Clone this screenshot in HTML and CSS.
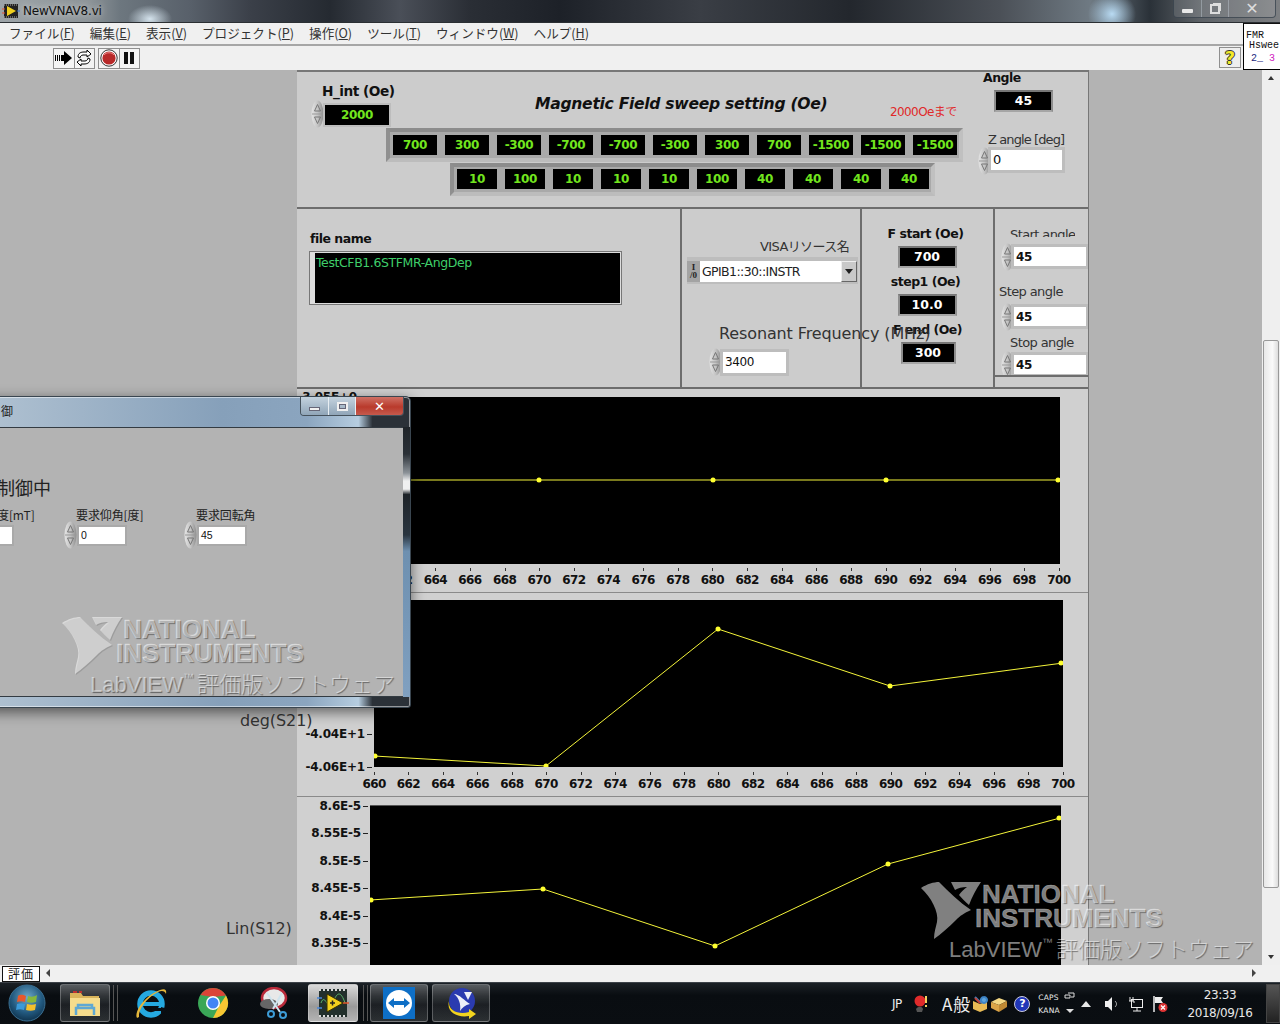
FILE: index.html
```html
<!DOCTYPE html>
<html lang="ja">
<head>
<meta charset="utf-8">
<title>NewVNAV8.vi</title>
<link rel="stylesheet" href="styles.css">
</head>
<body>
<svg class="defs" width="0" height="0">
  <defs>
    <linearGradient id="spinGrad" x1="0" x2="1" y1="0" y2="0">
      <stop offset="0" stop-color="#e4e4e4"/><stop offset=".5" stop-color="#c4c4c4"/><stop offset="1" stop-color="#8e8e8e"/>
    </linearGradient>
    <symbol id="spin" viewBox="0 0 13 28">
      <ellipse cx="6.5" cy="14" rx="6" ry="13.5" fill="url(#spinGrad)"/>
      <path d="M6.5 4.5 L9.5 11 H3.5 Z" fill="none" stroke="#777"/>
      <path d="M6.5 23.5 L9.5 17 H3.5 Z" fill="none" stroke="#777"/>
      <path d="M1 14 H12" stroke="#999"/>
    </symbol>
    <symbol id="nilogo" viewBox="0 0 60 58">
      <path d="M0 6 C6 2 13 0 18 0 C28 10 38 20 50 28 C43 31 39 34 35 38 C28 45 20 52 13 57 C13 50 15 45 16 40 C18 30 10 15 0 6 Z"/>
      <path d="M30 0 H60 C55 7 51 15 48 23 C44 20 41 16 38 13 C40 10 43 7 46 5 C41 5 37 6 34 8 Z"/>
    </symbol>
  </defs>
</svg>

<header class="titlebar">
  <svg class="app-icon" width="18" height="18" viewBox="0 0 18 18">
    <rect x="2" y="2" width="14" height="14" fill="#222"/>
    <path d="M2 3 H16 M2 15 H16" stroke="#aaa" stroke-dasharray="1 1"/>
    <path d="M5 4 L14 9 L5 14 Z" fill="#f0d020"/>
    <path d="M0 7 H3 M0 11 H3" stroke="#e05030"/><path d="M15 9 H18" stroke="#3070d0"/>
  </svg>
  <span class="title-text">NewVNAV8.vi</span>
  <div class="caption-buttons">
    <span class="cap cap-min"><i class="cap-bar"></i></span>
    <span class="cap cap-max"><i class="cap-sq"></i></span>
    <span class="cap cap-close">✕</span>
  </div>
</header>

<div class="chrome">
  <div class="chrome-bars">
    <nav class="menubar">
      <span>ファイル(<u>F</u>)</span><span>編集(<u>E</u>)</span><span>表示(<u>V</u>)</span><span>プロジェクト(<u>P</u>)</span><span>操作(<u>O</u>)</span><span>ツール(<u>T</u>)</span><span>ウィンドウ(<u>W</u>)</span><span>ヘルプ(<u>H</u>)</span>
    </nav>
    <div class="toolbar">
      <div class="tool-group">
        <span class="tool">
          <svg width="18" height="14" viewBox="0 0 18 14"><path d="M0 4 H1 V10 H0 Z M2 4 H3 V10 H2 Z M4 4 H5 V10 H4 Z M6 4 H9 V0 L17 7 L9 14 V10 H6 Z" fill="#000"/></svg>
        </span>
        <span class="tool">
          <svg width="18" height="18" viewBox="0 0 18 18" fill="none" stroke="#000"><path d="M3 8 C3 4 6 3 9 3 H12 V1 L16 5 L12 8 V6 H8 C6 6 5 8 5 9 Z" fill="#fff"/><path d="M15 10 C15 14 12 15 9 15 H6 V17 L2 13 L6 10 V12 H10 C12 12 13 10 13 9 Z" fill="#fff"/></svg>
        </span>
      </div>
      <div class="tool-group">
        <span class="tool">
          <svg width="18" height="18" viewBox="0 0 18 18"><circle cx="9" cy="9" r="8.2" fill="#fff" stroke="#333"/><circle cx="9" cy="9" r="6.6" fill="#b82a2a"/><path d="M4 6 C6 3 12 3 14 6" stroke="#e88" fill="none"/></svg>
        </span>
        <span class="tool">
          <svg width="12" height="12" viewBox="0 0 12 12"><path d="M1 0 H5 V12 H1 Z M7 0 H11 V12 H7 Z" fill="#111"/></svg>
        </span>
      </div>
      <span class="tool help-tool">
        <span class="help-mark">?</span>
      </span>
    </div>
  </div>
  <div class="vi-icon">
    <div class="vi-l1">FMR</div>
    <div class="vi-l2">Hswee</div>
    <div class="vi-l3"><span class="vi-a">2_</span> <span class="vi-b">3</span></div>
  </div>
</div>

<main class="main">
  <div class="panel">
    <section class="sec-top">
      <label class="lbl-b hint-label">H_int (Oe)</label>
      <svg class="spin hint-spin"><use href="#spin"/></svg>
      <div class="num-green hint-box">2000</div>
      <h1 class="sweep-title">Magnetic Field sweep setting (Oe)</h1>
      <div class="red-note">2000Oeまで</div>
      <label class="lbl-b angle-label">Angle</label>
      <div class="ind-white angle-box">45</div>
      <label class="lbl-n zangle-label">Z angle [deg]</label>
      <svg class="spin zangle-spin"><use href="#spin"/></svg>
      <div class="input zangle-input">0</div>
      <div class="array array-1">
        <span class="cell">700</span><span class="cell">300</span><span class="cell">-300</span><span class="cell">-700</span><span class="cell">-700</span><span class="cell">-300</span><span class="cell">300</span><span class="cell">700</span><span class="cell">-1500</span><span class="cell">-1500</span><span class="cell">-1500</span>
      </div>
      <div class="array array-2">
        <span class="cell">10</span><span class="cell">100</span><span class="cell">10</span><span class="cell">10</span><span class="cell">10</span><span class="cell">100</span><span class="cell">40</span><span class="cell">40</span><span class="cell">40</span><span class="cell">40</span>
      </div>
    </section>

    <section class="sec-row">
      <div class="sec sec-file">
        <label class="lbl-b file-label">file name</label>
        <div class="file-box">TestCFB1.6STFMR-AngDep</div>
      </div>
      <div class="sec sec-visa">
        <label class="lbl-n visa-label">VISAリソース名</label>
        <div class="combo">
          <span class="combo-io">I<br>/0</span>
          <span class="combo-text">GPIB1::30::INSTR</span>
          <span class="combo-arrow"></span>
        </div>
        <label class="res-label">Resonant Frequency (MHz)</label>
        <svg class="spin res-spin"><use href="#spin"/></svg>
        <div class="input res-input">3400</div>
      </div>
      <div class="sec sec-f">
        <label class="lbl-b f-label">F start (Oe)</label>
        <div class="ind-white f-box">700</div>
        <label class="lbl-b f-label">step1 (Oe)</label>
        <div class="ind-white f-box">10.0</div>
        <label class="lbl-b f-label f-end">F end (Oe)</label>
        <div class="ind-white f-box f-box-end">300</div>
      </div>
      <div class="sec sec-ang">
        <label class="lbl-n ang-l ang-l1">Start angle</label>
        <svg class="spin ang-s ang-s1"><use href="#spin"/></svg>
        <div class="input ang-i ang-i1">45</div>
        <label class="lbl-n ang-l ang-l2">Step angle</label>
        <svg class="spin ang-s ang-s2"><use href="#spin"/></svg>
        <div class="input ang-i ang-i2">45</div>
        <label class="lbl-n ang-l ang-l3">Stop angle</label>
        <svg class="spin ang-s ang-s3"><use href="#spin"/></svg>
        <div class="input ang-i ang-i3">45</div>
      </div>
    </section>

    <section class="chart chart-1">
      <div class="chart-row">
        <div class="yaxis yaxis-1"><span class="ylab">3.05E+0</span></div>
        <div class="plot plot-1">
          <svg width="694" height="167" viewBox="0 0 694 167">
            <polyline class="trace" points="0,83 173,83 347,83 520,83 693,83"/>
            <circle class="dot" cx="173" cy="83" r="2.5"/><circle class="dot" cx="347" cy="83" r="2.5"/><circle class="dot" cx="520" cy="83" r="2.5"/><circle class="dot" cx="692" cy="83" r="2.5"/>
          </svg>
        </div>
      </div>
      <div class="xaxis xaxis-1">
        <span>660</span><span>662</span><span>664</span><span>666</span><span>668</span><span>670</span><span>672</span><span>674</span><span>676</span><span>678</span><span>680</span><span>682</span><span>684</span><span>686</span><span>688</span><span>690</span><span>692</span><span>694</span><span>696</span><span>698</span><span>700</span>
      </div>
    </section>

    <section class="chart chart-2">
      <div class="chart-row">
        <div class="yaxis yaxis-2"><span class="ylab">-4.04E+1</span><span class="ylab">-4.06E+1</span></div>
        <div class="plot plot-2">
          <svg width="689" height="167" viewBox="0 0 689 167">
            <polyline class="trace" points="0,156 172,166 344,29 516,86 689,63"/>
            <circle class="dot" cx="1" cy="156" r="2.5"/><circle class="dot" cx="172" cy="166" r="2.5"/><circle class="dot" cx="344" cy="29" r="2.5"/><circle class="dot" cx="516" cy="86" r="2.5"/><circle class="dot" cx="687" cy="63" r="2.5"/>
          </svg>
        </div>
      </div>
      <div class="xaxis xaxis-2">
        <span>660</span><span>662</span><span>664</span><span>666</span><span>668</span><span>670</span><span>672</span><span>674</span><span>676</span><span>678</span><span>680</span><span>682</span><span>684</span><span>686</span><span>688</span><span>690</span><span>692</span><span>694</span><span>696</span><span>698</span><span>700</span>
      </div>
      <div class="axis-name deg-name">deg(S21)</div>
    </section>

    <section class="chart chart-3">
      <div class="chart-row">
        <div class="yaxis yaxis-3"><span class="ylab">8.6E-5</span><span class="ylab">8.55E-5</span><span class="ylab">8.5E-5</span><span class="ylab">8.45E-5</span><span class="ylab">8.4E-5</span><span class="ylab">8.35E-5</span></div>
        <div class="plot plot-3">
          <svg width="691" height="160" viewBox="0 0 691 160">
            <polyline class="trace" points="0,94 173,83 345,140 518,58 690,12"/>
            <circle class="dot" cx="1" cy="94" r="2.5"/><circle class="dot" cx="173" cy="83" r="2.5"/><circle class="dot" cx="345" cy="140" r="2.5"/><circle class="dot" cx="518" cy="58" r="2.5"/><circle class="dot" cx="689" cy="12" r="2.5"/>
          </svg>
        </div>
      </div>
      <div class="axis-name lin-name">Lin(S12)</div>
    </section>
  </div>
  <div class="vscroll">
    <span class="vs-up"></span>
    <span class="vs-thumb"></span>
    <span class="vs-down"></span>
  </div>
  <div class="watermark wm-main">
    <svg class="wm-logo"><use href="#nilogo"/></svg>
    <div class="wm-l1">NATIONAL</div>
    <div class="wm-l2">INSTRUMENTS</div>
    <div class="wm-l3"><span class="wm-lab">LabVIEW</span><span class="wm-tm">™</span><span class="wm-jp">評価版ソフトウェア</span></div>
  </div>
</main>

<div class="hscroll">
  <span class="eval-tag">評価</span>
  <span class="hs-left"></span>
  <span class="hs-right"></span>
</div>

<footer class="taskbar">
  <svg class="orb" width="38" height="38" viewBox="0 0 38 38">
    <defs>
      <radialGradient id="orbG" cx=".5" cy=".35" r=".7"><stop offset="0" stop-color="#6fa9c9"/><stop offset=".6" stop-color="#22597f"/><stop offset="1" stop-color="#0c2c44"/></radialGradient>
    </defs>
    <circle cx="19" cy="19" r="18" fill="url(#orbG)" stroke="#3a6f92"/>
    <path d="M10 12 C13 10 15 11 18 12 L17 18 C14 17 12 17 9 18 Z" fill="#e8572c"/>
    <path d="M20 12 C23 13 26 13 29 11 L28 18 C25 19 22 19 19 18 Z" fill="#86b83a"/>
    <path d="M9 20 C12 19 14 19 17 20 L16 26 C13 25 11 25 8 26 Z" fill="#3b9ad9"/>
    <path d="M19 20 C22 21 25 21 28 20 L27 26 C24 27 21 27 18 26 Z" fill="#f5c02c"/>
  </svg>

  <span class="task-btn tb-explorer">
    <svg width="34" height="30" viewBox="0 0 34 30">
      <path d="M2 5 H13 L15 8 H31 V28 H2 Z" fill="#d9b45a"/>
      <path d="M2 10 H32 V28 H2 Z" fill="#f6dc8c"/>
      <path d="M8 27 V20 H26 V27 M10 20 V17 H24 V20" fill="none" stroke="#5fa8d3" stroke-width="2.5"/>
      <path d="M5 4 H9 M11 4 H14" stroke="#c03030" stroke-width="2"/>
    </svg>
  </span>
  <i class="task-sep sep-1"></i>

  <svg class="tray-app ie" width="34" height="34" viewBox="0 0 34 34">
    <circle cx="17" cy="18" r="11" fill="none" stroke="#25a9e0" stroke-width="5.5"/>
    <path d="M8 18 H28" stroke="#25a9e0" stroke-width="4"/>
    <path d="M18 22 H30 V25 H18 Z M27 21 L34 23 L27 29 Z" fill="#0a0f14"/>
    <path d="M3 32 C0 26 10 10 26 4 C31 2 33 4 32 8 C31 5 28 4 24 6 C12 12 4 24 5 31 Z" fill="#e5b73b"/>
  </svg>
  <svg class="tray-app chrome-ic" width="32" height="32" viewBox="0 0 32 32">
    <circle cx="16" cy="16" r="15" fill="#3aa757"/>
    <path d="M16 1 A15 15 0 0 1 29 8.5 L16 10 L3.5 8 A15 15 0 0 1 16 1 Z" fill="#db4437"/>
    <path d="M29 8.5 A15 15 0 0 1 16 31 L22 19 Z" fill="#f7c632"/>
    <circle cx="16" cy="16" r="7" fill="#fff"/><circle cx="16" cy="16" r="5.5" fill="#4285f4"/>
  </svg>
  <svg class="tray-app scissor" width="32" height="32" viewBox="0 0 32 32">
    <ellipse cx="16" cy="11" rx="12" ry="10" fill="#e8e8e8" stroke="#b82a3a" stroke-width="2.5"/>
    <ellipse cx="11" cy="17" rx="9" ry="5" fill="#666"/>
    <path d="M9 6 L22 25 M24 6 L15 22" stroke="#cfe4ee" stroke-width="2"/>
    <circle cx="25" cy="28" r="3" fill="none" stroke="#3d9cd6" stroke-width="2"/><circle cx="13" cy="27" r="3" fill="none" stroke="#3d9cd6" stroke-width="2"/>
  </svg>

  <span class="task-btn tb-lv">
    <svg width="32" height="32" viewBox="0 0 32 32">
      <rect x="2" y="2" width="28" height="28" fill="#23302c"/>
      <path d="M2 3 H30 M2 29 H30" stroke="#d8d8d8" stroke-width="2" stroke-dasharray="2 2"/>
      <path d="M4 16 C8 4 12 28 16 16 S24 4 28 16" fill="none" stroke="#5bb56a"/>
      <path d="M10 7 L26 16 L10 25 Z" fill="#f2cf1d" stroke="#3a3000"/>
      <path d="M13 16 H18 M15.5 13.500 V18.500" stroke="#222" stroke-width="1.500"/>
      <path d="M0 11 H5 M0 21 H5" stroke="#4a86d8" stroke-width="1.500"/><path d="M26 16 H32" stroke="#e0552c" stroke-width="1.500"/>
    </svg>
  </span>
  <i class="task-sep sep-2"></i>
  <span class="task-btn tb-tv">
    <svg width="32" height="32" viewBox="0 0 32 32">
      <rect width="32" height="32" fill="#0e6fc6"/>
      <circle cx="16" cy="16" r="13" fill="#fff"/>
      <path d="M5 16 L11 11 V14 H21 V11 L27 16 L21 21 V18 H11 V21 Z" fill="#0e6fc6"/>
    </svg>
  </span>
  <span class="task-btn tb-ni">
    <svg width="32" height="32" viewBox="0 0 32 32">
      <circle cx="17" cy="14" r="13" fill="#2b3bb0"/>
      <path d="M9 7 C14 7 20 14 25 17 C20 18 17 21 15 24 C16 17 14 11 9 7 Z M19 5 H27 L23 13 Z" fill="#eef0f8"/>
      <path d="M4 14 C3 24 14 28 24 25 V22 L31 27 L24 32 V29 C12 31 1 25 4 14 Z" fill="#f2d41e"/>
    </svg>
  </span>

  <div class="tray">
    <span class="tray-jp">JP</span>
    <svg width="16" height="18" viewBox="0 0 16 18"><circle cx="7" cy="6" r="5.500" fill="#e02b2b"/><path d="M3 14 C5 11 9 11 10 14 L9 17 H4 Z" fill="#555"/><path d="M13 1 V8 M13 10 V12" stroke="#f4d060" stroke-width="2"/></svg>
    <span class="tray-ime">A</span>
    <span class="tray-ime tray-han">般</span>
    <svg class="tray-ic1" width="16" height="16" viewBox="0 0 16 16"><path d="M1 5 L8 8 L15 5 V13 L8 16 L1 13 Z" fill="#e9bb55"/><path d="M3 1 L9 7 M12 1 A3 3 0 1 1 11.900 1" stroke="#3d84c6" stroke-width="2" fill="#5fa4dc"/><path d="M3 2 L8 7" stroke="#c0423a" stroke-width="2"/></svg>
    <svg class="tray-ic2" width="16" height="16" viewBox="0 0 16 16"><path d="M0 6 L8 2 L16 5 L8 9 Z" fill="#f4d884"/><path d="M0 6 L8 9 V16 L0 12 Z" fill="#dba548"/><path d="M8 9 L16 5 V11 L8 16 Z" fill="#c08a34"/></svg>
    <span class="tray-q">?</span>
    <div class="tray-caps"><span>CAPS</span><span>KANA</span></div>
    <svg width="12" height="24" viewBox="0 0 12 24"><path d="M1 3 H6 V6 H1 Z M4 1 H10 V5 H7" fill="none" stroke="#ddd"/><path d="M2 17 H10 L6 21 Z" fill="#ddd"/></svg>
    <svg class="tray-up" width="10" height="6" viewBox="0 0 10 6"><path d="M0 6 L5 0 L10 6 Z" fill="#e8e8e8"/></svg>
    <svg class="tray-speak" width="14" height="16" viewBox="0 0 14 16"><path d="M0 5 H3 L7 1 V15 L3 11 H0 Z" fill="#eee"/><path d="M10 5 C12 7 12 9 10 11" fill="none" stroke="#bbb"/></svg>
    <svg class="tray-net" width="16" height="16" viewBox="0 0 16 16" fill="none" stroke="#eee"><path d="M2 1 V5 M5 1 V5 M1 5 H6 V7"/><rect x="3.500" y="3.500" width="11" height="8"/><path d="M5 15 H13 M9 12 V15"/></svg>
    <svg class="tray-flag" width="16" height="18" viewBox="0 0 16 18"><path d="M2 1 V17" stroke="#eee" stroke-width="1.500"/><path d="M3 2 H11 L9 5 L11 8 H3 Z" fill="#eee"/><circle cx="11" cy="12.500" r="4.500" fill="#d33"/><path d="M9 10.500 L13 14.500 M13 10.500 L9 14.500" stroke="#fff" stroke-width="1.300"/></svg>
  </div>
  <div class="clock"><span>23:33</span><span>2018/09/16</span></div>
  <span class="show-desktop"></span>
</footer>

<aside class="float-win">
  <div class="fw-title">
    <span class="fw-title-text">御</span>
    <div class="fw-buttons">
      <span class="fwb fwb-min"><i></i></span>
      <span class="fwb fwb-max"><i></i></span>
      <span class="fwb fwb-close">✕</span>
    </div>
  </div>
  <div class="fw-client">
    <div class="fw-heading">制御中</div>
    <label class="fw-l fw-l0">度[mT]</label>
    <div class="fw-input fw-i0"></div>
    <label class="fw-l fw-l1">要求仰角[度]</label>
    <svg class="spin fw-s1"><use href="#spin"/></svg>
    <div class="fw-input fw-i1">0</div>
    <label class="fw-l fw-l2">要求回転角</label>
    <svg class="spin fw-s2"><use href="#spin"/></svg>
    <div class="fw-input fw-i2">45</div>
    <div class="watermark wm-win">
      <svg class="wm-logo"><use href="#nilogo"/></svg>
      <div class="wm-l1">NATIONAL</div>
      <div class="wm-l2">INSTRUMENTS</div>
      <div class="wm-l3"><span class="wm-lab">LabVIEW</span><span class="wm-tm">™</span><span class="wm-jp">評価版ソフトウェア</span></div>
    </div>
  </div>
  <div class="fw-bottom"></div>
  <div class="fw-side"></div>
</aside>
</body>
</html>
```
FILE: styles.css
```css
* { box-sizing: border-box; }
html, body { margin: 0; padding: 0; }
body {
  width: 1280px; height: 1024px; overflow: hidden; position: relative;
  display: flex; flex-direction: column;
  font-family: "DejaVu Sans", "Noto Sans CJK JP", sans-serif;
  background: #b3b3b3; color: #111;
}
.defs { position: absolute; }
label { display: block; }

/* window title */
.titlebar {
  height: 23px; flex: none; position: relative; display: flex; align-items: center; padding-left: 2px; gap: 3px;
  background:
    radial-gradient(ellipse 22px 14px at 150px 19px, rgba(225,240,250,.9), rgba(225,240,250,0)),
    radial-gradient(ellipse 24px 22px at 1112px 14px, rgba(190,225,250,.95), rgba(190,225,250,0)),
    linear-gradient(90deg, #9da4a8 0, #8d9498 90px, #6d777f 120px, #58606a 190px, #3b4049 250px, #252a31 330px, #4a4f58 400px, #2a2e35 470px, #1d2128 560px, #3a3e45 700px, #23272d 850px, #4b5057 1000px, #6f7a83 1090px, #2a3138 1150px, #5d6267 1200px, #7d7f82 1280px);
  border-bottom: 1px solid #2b2f33;
}
.app-icon { flex: none; }
.title-text { font: 12px "DejaVu Sans", sans-serif; color: #111; text-shadow: 0 0 6px #ddd; letter-spacing: -.2px; }
.caption-buttons {
  position: absolute; right: 4px; top: 0; height: 18px; width: 103px; display: flex;
  border: 1px solid rgba(60,70,80,.8); border-top: 0; border-radius: 0 0 4px 4px; overflow: hidden;
}
.cap { display: flex; align-items: center; justify-content: center; color: #e8e8e8; border-right: 1px solid rgba(200,210,220,.4); background: rgba(255,255,255,.12); }
.cap-min { width: 28px; }
.cap-max { width: 27px; }
.cap-close { flex: 1; border-right: 0; font: bold 16px "DejaVu Sans", sans-serif; color: #ddd; }
.cap-bar { width: 11px; height: 4px; background: #e8e8e8; margin-top: 5px; border-radius: 1px; }
.cap-sq { width: 10px; height: 10px; border: 2px solid #ddd; box-shadow: 2px -2px 0 -1px #ddd; }

/* menu + tool bars */
.chrome { height: 47px; flex: none; display: flex; background: #f0f0f0; }
.chrome-bars { width: 1243px; display: flex; flex-direction: column; }
.menubar {
  height: 23px; display: flex; gap: 15px; align-items: center; padding: 0 0 3px 9px;
  font: 12.600px "Noto Sans CJK JP", sans-serif; color: #333; border-bottom: 2px solid #a6a6a6;
}
.menubar span { white-space: nowrap; }
.toolbar { height: 24px; display: flex; align-items: center; padding-left: 53px; gap: 4px; position: relative; }
.tool-group { display: flex; border: 0; gap: 0; }
.tool { width: 21.5px; height: 21px; border: 1px solid #8f8f8f; display: flex; align-items: center; justify-content: center; background: #f4f4f4; margin-right: -1px; }
.help-tool { position: absolute; left: 1219px; top: 1px; width: 22px; background: #eee; }
.help-mark { font: bold 18px "DejaVu Sans", sans-serif; color: #f2ea2a; text-shadow: -1px 0 #333, 1px 0 #333, 0 -1px #333, 0 1px #333; }
.vi-icon {
  width: 37px; background: #fff; border-left: 1px solid #000; border-bottom: 1px solid #000; border-top: 1px solid #111;
  font: 10px/10px "Liberation Mono", monospace; color: #111; padding-top: 7px; padding-left: 2px; white-space: nowrap; overflow: hidden;
}
.vi-l2 { padding-left: 3px; }
.vi-l3 { padding-left: 5px; padding-top: 3px; }
.vi-a { color: #1d2a80; }
.vi-b { color: #d020c0; }

/* main area */
.main { height: 895px; flex: none; display: flex; position: relative; overflow: hidden; background: #b3b3b3; padding-left: 297px; }
.panel { width: 792px; flex: none; background: #cccccc; border-right: 1px solid #777; position: relative; }
.vscroll { position: absolute; right: 0; top: 0; width: 18px; height: 100%; background: #efefef; }
.vs-up { position: absolute; left: 6px; top: 3px; border: 3px solid transparent; border-bottom: 4px solid #333; }
.vs-thumb { position: absolute; left: 1px; right: 1px; top: 270px; height: 548px; background: linear-gradient(90deg, #e8e8e8, #fafafa 60%, #ddd); border: 1px solid #999; border-radius: 2px; }
.vs-down { position: absolute; left: 6px; bottom: 3px; border: 3px solid transparent; border-top: 4px solid #333; }

.lbl-b { font: bold 13px/16px "DejaVu Sans", sans-serif; letter-spacing: -.5px; white-space: nowrap; color: #111; }
.lbl-n { font: 13px/16px "DejaVu Sans", "Noto Sans CJK JP", sans-serif; letter-spacing: -.6px; white-space: nowrap; color: #333; }
.spin { width: 13px; height: 28px; position: absolute; display: block; }
.input { position: absolute; background: #fff; box-shadow: 0 0 0 3px #bdbdbd; font: 12.500px/20px "DejaVu Sans", sans-serif; color: #111; padding-left: 2px; }

/* top section */
.sec-top { height: 139px; position: relative; border-bottom: 2px solid #6d6d6d; border-top: 2px solid #777; }
.hint-label { position: absolute; left: 25px; top: 11px; font-size: 13.700px; }
.hint-spin { left: 14px; top: 28px; }
.num-green, .cell {
  background: #000; color: #72e51e; font: bold 12px/20px "DejaVu Sans", sans-serif; text-align: center; letter-spacing: -.4px;
}
.hint-box { position: absolute; left: 28px; top: 33px; width: 64px; height: 20px; box-shadow: 0 0 0 2px #bdbdbd; }
.sweep-title { position: absolute; left: 238px; top: 22px; margin: 0; font: italic bold 15.600px/20px "DejaVu Sans", sans-serif; color: #111; white-space: nowrap; letter-spacing: -.3px; }
.red-note { position: absolute; left: 593px; top: 32px; font: 12px/16px "DejaVu Sans", "Noto Sans CJK JP", sans-serif; letter-spacing: -.6px; color: #e02828; white-space: nowrap; }
.angle-label { position: absolute; left: 686px; top: -2px; font-size: 12.500px; }
.ind-white { background: #000; color: #fff; font: bold 12.500px/18px "DejaVu Sans", sans-serif; text-align: center; border: 2px solid #8d8d8d; border-top-color: #777; border-bottom-color: #a5a5a5; }
.angle-box { position: absolute; left: 697px; top: 18px; width: 59px; height: 22px; }
.zangle-label { position: absolute; left: 691px; top: 60px; letter-spacing: -.9px; }
.zangle-spin { left: 681px; top: 75px; }
.zangle-input { left: 694px; top: 78px; width: 71px; height: 20px; font-size: 13px; }
.array { position: absolute; display: flex; gap: 8px; background: #a9a9a9; border-style: solid; border-color: #8c8c8c #c0c0c0 #bcbcbc #8f8f8f; border-width: 4px; padding: 3px; }
.array-1 { left: 89px; top: 56px; width: 577px; height: 34px; padding: 3px 2px 3px 3px; }
.array-1 .cell { width: 44px; height: 20px; flex: none; }
.array-2 { left: 153px; top: 91px; width: 485px; height: 33px; padding: 2px 2px 3px 3px; }
.array-2 .cell { width: 40px; height: 20px; flex: none; }

/* second row */
.sec-row { height: 180px; display: flex; border-bottom: 2px solid #6d6d6d; }
.sec { position: relative; border-right: 2px solid #6d6d6d; height: 100%; }
.sec-file { width: 385px; }
.file-label { position: absolute; left: 13px; top: 22px; font-size: 12.500px; }
.file-box {
  position: absolute; left: 13px; top: 43px; width: 311px; height: 52px; background: #000; color: #3fce6a;
  font: 12.500px/20px "DejaVu Sans", sans-serif; letter-spacing: -.4px; padding: 0 0 0 1px; border: 1px solid #ddd; border-left-width: 5px; outline: 1px solid #777;
}
.sec-visa { width: 180px; }
.visa-label { position: absolute; left: 78px; top: 30px; }
.combo { position: absolute; left: 5px; top: 48px; width: 171px; height: 27px; background: #bdbdbd; display: flex; align-items: center; padding: 4px 1px 2px 0; }
.combo-io { width: 13px; height: 21px; background: #a3a3a3; font: bold 9px/8px "Liberation Serif", serif; text-align: center; color: #222; flex: none; padding-top: 2px; }
.combo-text { flex: 1; height: 21px; background: #fff; font: 12.500px/21px "DejaVu Sans", sans-serif; letter-spacing: -.6px; padding-left: 2px; color: #222; white-space: nowrap; }
.combo-arrow { width: 16px; height: 21px; flex: none; background: #c9c9c9; border: 1px solid; border-color: #eee #666 #666 #eee; position: relative; }
.combo-arrow::after { content: ""; position: absolute; left: 3px; top: 7px; border: 4px solid transparent; border-top: 5px solid #222; }
.res-label { position: absolute; left: 37px; top: 115px; font: 16px/20px "DejaVu Sans", sans-serif; letter-spacing: -.12px; color: #333; white-space: nowrap; z-index: 2; }
.res-spin { left: 27px; top: 139px; }
.res-input { left: 41px; top: 143px; width: 63px; height: 21px; font-size: 12px; line-height: 21px; letter-spacing: -.4px; }
.sec-f { width: 133px; display: flex; flex-direction: column; align-items: center; padding: 17px 5px 0 0; }
.f-label { height: 16px; line-height: 16px; margin-left: 1px; font-size: 12.500px; }
.f-box { width: 59px; height: 22px; margin: 4px 0 6px 4px; padding: 0; }
.f-end { margin-left: 5px; }
.f-box-end { width: 55px; margin-left: 6px; }
.sec-ang { width: 93px; height: 168px; border-right: 0; border-bottom: 2px solid #6d6d6d; overflow: hidden; }
.ang-l { position: absolute; }
.ang-l1 { left: 15px; top: 18px; height: 10px; overflow: hidden; }
.ang-l2 { left: 4px; top: 75px; }
.ang-l3 { left: 15px; top: 126px; }
.ang-s { left: 6px; }
.ang-s1 { top: 34px; }
.ang-s2 { top: 94px; }
.ang-s3 { top: 142px; }
.ang-i { left: 19px; width: 72px; height: 19px; font-weight: bold; font-size: 12px; line-height: 20px; letter-spacing: -.3px; padding-left: 2px; }
.ang-i1 { top: 38px; }
.ang-i2 { top: 98px; }
.ang-i3 { top: 146px; }

/* charts */
.chart { position: relative; background: #d0d0d0; border-bottom: 1px solid #8a8a8a; }
.chart-1 { height: 204px; padding-top: 8px; }
.chart-2 { height: 204px; padding-top: 7px; }
.chart-3 { height: 168px; padding-top: 8px; border-bottom: 0; }
.chart-row { display: flex; }
.plot { background: #000; flex: none; }
.plot svg { display: block; }
.plot-1 { width: 694px; height: 167px; }
.plot-2 { width: 689px; height: 167px; }
.plot-3 { width: 691px; height: 160px; border-top: 1px solid #555; }
.trace { fill: none; stroke: #f4f43a; stroke-width: 1; }
.dot { fill: #ffff30; }
.yaxis { display: flex; flex-direction: column; align-items: flex-end; flex: none; font: bold 12px/16px "DejaVu Sans", sans-serif; letter-spacing: -.2px; color: #111; padding-right: 9px; position: relative; white-space: nowrap; }
.ylab { position: relative; }
.ylab::after { content: ""; position: absolute; right: -7px; top: 8px; width: 5px; height: 1px; background: #222; }
.yaxis-1 { width: 69px; margin-top: -8px; height: 16px; }
.yaxis-2 { width: 77px; justify-content: flex-end; height: 167px; gap: 17px; position: relative; top: 1px; }
.yaxis-2 .ylab:last-child { margin-bottom: -7px; }
.yaxis-3 { width: 73px; gap: 11.400px; margin-top: -7px; }
.xaxis { display: flex; font: bold 12px/16px "DejaVu Sans", sans-serif; letter-spacing: -.6px; color: #111; }
.xaxis span { flex: none; text-align: center; position: relative; }
.xaxis span::before { content: ""; position: absolute; left: 50%; top: -4px; width: 1px; height: 3px; background: #333; }
.xaxis-1 { margin-left: 51.700px; margin-top: 8px; }
.xaxis-1 span { width: 34.650px; }
.xaxis-2 { margin-left: 59.800px; margin-top: 9px; }
.xaxis-2 span { width: 34.450px; }
.axis-name { position: absolute; font: 16px/20px "DejaVu Sans", sans-serif; letter-spacing: -.1px; color: #333; white-space: nowrap; }
.deg-name { left: -57px; top: 118px; }
.lin-name { left: -71px; top: 122px; }

/* watermark */
.watermark { position: absolute; width: 340px; height: 82px; color: rgba(255,255,255,.5); pointer-events: none; z-index: 5; }
.wm-logo { position: absolute; left: 0; top: 0; width: 60px; height: 58px; fill: rgba(255,255,255,.5); filter: drop-shadow(1px 1px 0 rgba(0,0,0,.25)); }
.wm-l1, .wm-l2 { position: absolute; font: bold 26px/24px "Liberation Sans", sans-serif; -webkit-text-stroke: .5px rgba(255,255,255,.4); text-shadow: 1px 1px 1px rgba(0,0,0,.45); white-space: nowrap; }
.wm-l1 { left: 61px; top: 0; }
.wm-l2 { left: 54px; top: 24px; }
.wm-l3 { position: absolute; left: 28px; top: 51px; display: flex; align-items: baseline; white-space: nowrap; text-shadow: 1px 1px 1px rgba(0,0,0,.45); }
.wm-lab { font: 22px/28px "Liberation Sans", sans-serif; }
.wm-tm { font: 11px/14px "Liberation Sans", sans-serif; width: 14px; align-self: flex-start; margin-top: 2px; }
.wm-jp { font: 300 22px/28px "Noto Sans CJK JP", sans-serif; }
.wm-main { left: 921px; top: 812px; }
.wm-win { left: 121px; top: 189px; }

/* bottom scroll */
.hscroll { height: 18px; flex: none; background: #f0f0f0; position: relative; border-bottom: 1px solid #3c4248; }
.eval-tag { position: absolute; left: 2px; top: 1px; width: 38px; height: 16px; border: 1px solid #111; background: #fff; font: 12px/14px "Noto Sans CJK JP", sans-serif; text-align: center; letter-spacing: 1px; color: #111; }
.hs-left { position: absolute; left: 42px; top: 4px; border: 4px solid transparent; border-right: 4px solid #444; }
.hs-right { position: absolute; left: 1252px; top: 4px; border: 4px solid transparent; border-left: 4px solid #444; }

/* taskbar */
.taskbar { height: 41px; flex: none; position: relative; background: linear-gradient(180deg, #1b2126, #090d11 30%, #0a0e12); display: block; }
.taskbar > svg.orb { position: absolute; left: 8px; top: 1px; }
.task-btn { position: absolute; top: 1px; height: 38px; border-radius: 3px; display: flex; align-items: center; justify-content: center; background: linear-gradient(180deg, rgba(255,255,255,.28), rgba(255,255,255,.08) 55%, rgba(255,255,255,.14)); border: 1px solid rgba(255,255,255,.25); }
.tb-explorer { left: 60px; width: 50px; }
.tb-lv { left: 308px; width: 50px; background: linear-gradient(180deg, #d9d9d9, #9a9a9a 60%, #b4b4b4); }
.tb-tv { left: 370px; width: 58px; }
.tb-ni { left: 432px; width: 58px; }
.task-sep { position: absolute; top: 2px; height: 36px; width: 5px; border-left: 1px solid #555; border-right: 1px solid #555; }
.sep-1 { left: 113px; }
.sep-2 { left: 363px; }
.tray-app { position: absolute; }
.ie { left: 134px; top: 3px; }
.chrome-ic { left: 197px; top: 4px; }
.scissor { left: 258px; top: 4px; }
.tray { position: absolute; left: 892px; top: 0; height: 41px; display: flex; align-items: center; color: #eee; }
.tray > * { flex: none; }
.tray-jp { font: 12px "DejaVu Sans", sans-serif; width: 21px; letter-spacing: -.5px; }
.tray-ime { font: 17px "Noto Sans CJK JP", sans-serif; margin-left: 13px; color: #eee; }
.tray-han { margin-left: 1px; }
.tray-ic1 { margin-left: 2px; }
.tray-ic2 { margin-left: 3px; }
.tray-q { width: 16px; height: 16px; border-radius: 50%; background: #2036b8; border: 1px solid #ccd; color: #fff; font: bold 11px/14px "DejaVu Sans", sans-serif; text-align: center; margin-left: 7px; }
.tray-caps { display: flex; flex-direction: column; font: 7.500px/13px "DejaVu Sans", sans-serif; margin-left: 8px; width: 26px; letter-spacing: .2px; }
.tray-up { margin-left: 5px; }
.tray-speak { margin-left: 14px; }
.tray-net { margin-left: 9px; }
.tray-flag { margin-left: 8px; }
.clock { position: absolute; left: 1180px; top: 3px; width: 80px; display: flex; flex-direction: column; align-items: center; font: 12px/18px "DejaVu Sans", sans-serif; letter-spacing: -.4px; color: #e8e8e8; }
.show-desktop { position: absolute; right: 0; top: 1px; width: 14px; height: 39px; background: linear-gradient(180deg, #555, #222); border: 1px solid #444; }

/* floating window */
.float-win {
  position: absolute; left: -60px; top: 396px; width: 471px; height: 312px;
  border: 1px solid #3a4650; border-radius: 5px 5px 3px 3px; box-shadow: 0 4px 14px rgba(0,0,0,.55), inset 0 0 0 1px rgba(255,255,255,.5);
  background: linear-gradient(90deg, #b8c8d6, #86a0ba 60%, #8ba5bf 78%, #b6cde0 89%, #2b3138 92%);
  z-index: 10; display: flex; flex-direction: column;
}
.fw-title { height: 30px; flex: none; position: relative; }
.fw-title-text { position: absolute; left: 60px; top: 5px; font: 12px "Noto Sans CJK JP", sans-serif; color: #222; }
.fw-buttons { position: absolute; right: 6px; top: 0; width: 104px; height: 19px; display: flex; border: 1px solid #46525c; border-top: 0; border-radius: 0 0 4px 4px; overflow: hidden; }
.fwb { display: flex; align-items: center; justify-content: center; background: linear-gradient(180deg, #c4d2de, #90a5b8); border-right: 1px solid #e8eef3; }
.fwb-min { width: 28px; }
.fwb-max { width: 27px; }
.fwb-close { flex: 1; border-right: 0; background: linear-gradient(180deg, #cf7064, #b93a2c 55%, #c65a4d); color: #fff; font: bold 13px "DejaVu Sans", sans-serif; }
.fwb-min i { width: 11px; height: 4px; background: #f0f0f0; border: 1px solid #667; margin-top: 5px; }
.fwb-max i { width: 11px; height: 9px; border: 2px solid #f0f0f0; outline: 1px solid #667; outline-offset: -3px; }
.fw-client { height: 270px; flex: none; width: 463px; background: #b3b3b3; border: 1px solid #333b42; border-left: 0; position: relative; overflow: hidden; }
.fw-bottom { flex: 1; }
.fw-side { position: absolute; right: 0; top: 30px; width: 7px; bottom: 10px; background: linear-gradient(180deg, #1f2429, #2a3036 10%, #8c9298 17%, #f0f0f0 20%, #f0f0f0 23%, #1e2328 25%, #2a3540 40%, #6e90b0 46%, #80a0c0 100%); }
.fw-heading { position: absolute; left: 56px; top: 47px; font: 18px/24px "Noto Sans CJK JP", sans-serif; color: #222; white-space: nowrap; }
.fw-l { position: absolute; top: 80px; font: 12px/14px "Noto Sans CJK JP", sans-serif; color: #222; white-space: nowrap; letter-spacing: -.1px; }
.fw-l0 { left: 56px; }
.fw-l1 { left: 135px; }
.fw-l2 { left: 255px; }
.fw-s1 { left: 123px; top: 93px; }
.fw-s2 { left: 243px; top: 93px; }
.fw-input { position: absolute; top: 99px; height: 17px; background: #fff; box-shadow: 0 0 0 2px #a9a9a9; font: 10.500px/17px "Liberation Sans", sans-serif; padding-left: 2px; color: #111; }
.fw-i0 { left: 30px; width: 41px; }
.fw-i1 { left: 138px; width: 46px; }
.fw-i2 { left: 258px; width: 46px; }
```
